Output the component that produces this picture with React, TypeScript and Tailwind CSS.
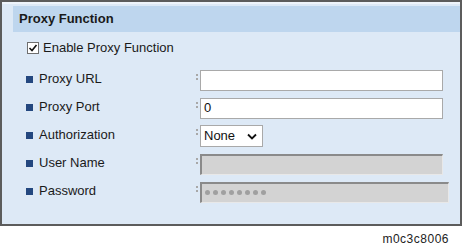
import React from 'react';

const font = { fontFamily: '"Liberation Sans", Arial, sans-serif' };

// two tiny dots that sit left of every field
const Colon = () => (
  <div className="flex flex-col gap-[2px] w-[3px] mr-[1px] self-start mt-[4px]">
    <span className="block w-[2px] h-[2px] bg-[#a8a8a8]" />
    <span className="block w-[2px] h-[2px] bg-[#a8a8a8]" />
  </div>
);

const Row: React.FC<{ label: string; children: React.ReactNode }> = ({ label, children }) => (
  <div className="flex items-center h-[28px]">
    <div className="flex items-center w-[194px] pl-[24px] -mt-[2px]">
      <span className="block w-[7px] h-[7px] bg-[#23477f] mr-[6px]" />
      <span className="text-[13px] text-[#1a1a1a]">{label}</span>
    </div>
    <div className="flex items-center">
      <Colon />
      {children}
    </div>
  </div>
);

const TextBox: React.FC<{ value?: string }> = ({ value = '' }) => (
  <div className="w-[243px] h-[21px] bg-white border border-[#a9a9a9] flex items-center pl-[3px] text-[13px] text-[#111]">
    {value}
  </div>
);

const Disabled: React.FC<{ wide?: boolean; dots?: boolean }> = ({ wide, dots }) => (
  <div
    className={
      (wide ? 'w-[249px] ' : 'w-[243px] ') +
      'h-[21px] bg-[#d3d3d3] border-t-2 border-l-2 border-[#8a8a8a] border-r border-b border-r-[#e8e8e8] border-b-[#e8e8e8] flex items-center pl-[3px] gap-[3px]'
    }
  >
    {dots &&
      Array.from({ length: 8 }).map((_, i) => (
        <span key={i} className="block w-[5px] h-[5px] rounded-full bg-[#a0a0a0]" />
      ))}
  </div>
);

export default function App() {
  return (
    <div className="w-[462px] h-[251px] bg-white relative" style={font}>
      <div className="w-[462px] h-[226px] border-2 border-[#5c5c5c] bg-[#dde9f6] flex flex-col">
        <div className="h-[2px] bg-[#eef4fb]" />
        <div className="h-[26px] mt-[2px] ml-[11px] bg-[#bed6ee] flex items-center pl-[6px]">
          <span className="text-[13px] font-bold text-[#1a1a1a]">Proxy Function</span>
        </div>
        <div className="flex items-center h-[18px] mt-[7px] pl-[25px]">
          <div className="w-[12px] h-[12px] bg-white border border-[#6f6f6f] flex items-center justify-center">
            <svg width="10" height="10" viewBox="0 0 10 10">
              <path d="M1.5 5 L4 7.5 L8.5 2" fill="none" stroke="#111" strokeWidth="1.6" />
            </svg>
          </div>
          <span className="text-[13px] text-[#1a1a1a] ml-[4px]">Enable Proxy Function</span>
        </div>
        <div className="mt-[9px] flex flex-col">
          <Row label="Proxy URL">
            <TextBox />
          </Row>
          <Row label="Proxy Port">
            <TextBox value="0" />
          </Row>
          <Row label="Authorization">
            <div className="w-[63px] h-[22px] bg-white border border-[#a9a9a9] flex items-center justify-between pl-[3px] pr-[5px] text-[13px] text-[#111]">
              <span>None</span>
              <svg width="10" height="7" viewBox="0 0 10 7">
                <path d="M1 1.5 L5 5.5 L9 1.5" fill="none" stroke="#111" strokeWidth="1.8" />
              </svg>
            </div>
          </Row>
          <Row label="User Name">
            <Disabled />
          </Row>
          <Row label="Password">
            <Disabled wide dots />
          </Row>
        </div>
      </div>
      <div className="absolute right-[13px] top-[230px] text-[12px] text-[#222] tracking-[0.5px]">m0c3c8006</div>
    </div>
  );
}
